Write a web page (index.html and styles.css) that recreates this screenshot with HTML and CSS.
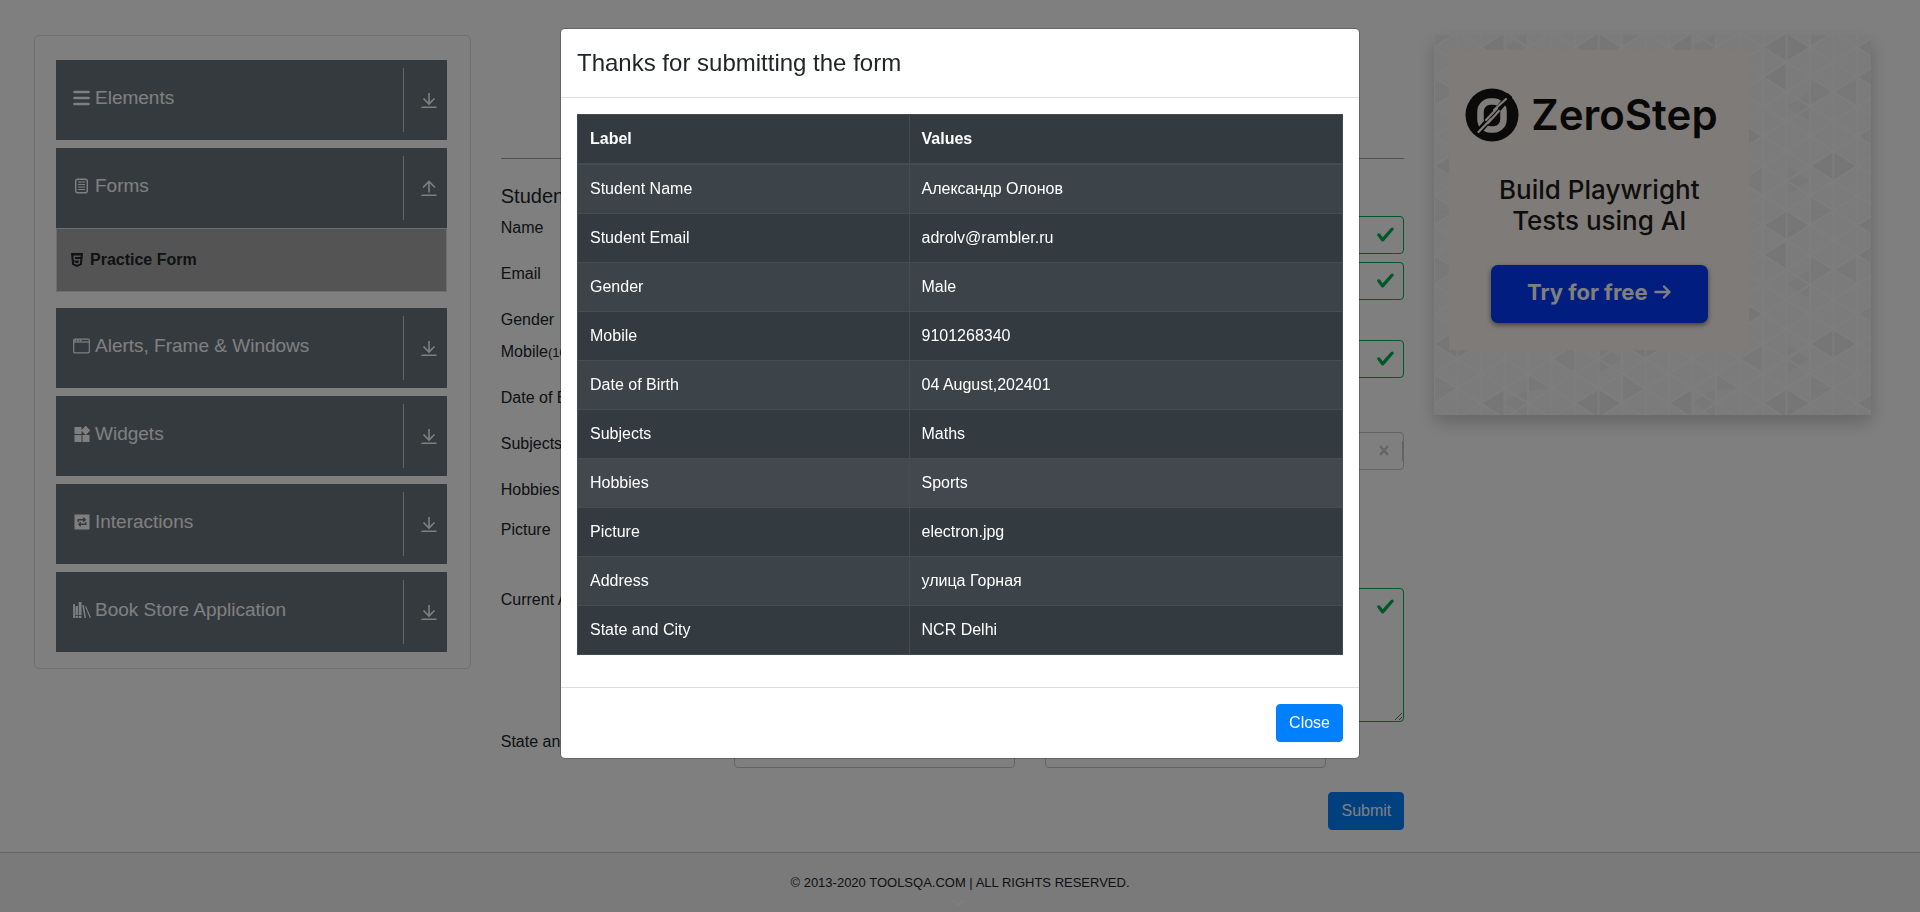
FILE: index.html
```html
<!DOCTYPE html>
<html lang="en">
<head>
<meta charset="utf-8">
<meta name="viewport" content="width=device-width, initial-scale=1">
<title>Practice Form</title>
<link rel="stylesheet" href="styles.css">
</head>
<body>
<svg class="defs" aria-hidden="true">
  <symbol id="down" viewBox="0 0 18 18"><path d="M9 2v11M3.500 7.500 9 13l5.500-5.500M1.500 16.300h15" fill="none" stroke="currentColor" stroke-width="1.600"/></symbol>
  <symbol id="up" viewBox="0 0 18 18"><path d="M9 13.500v-11M3 8.500 9 2.500l6 6M1.500 16.300h15" fill="none" stroke="currentColor" stroke-width="1.600"/></symbol>
  <symbol id="check" viewBox="0 0 8 8"><path fill="currentColor" d="M2.300 6.730.6 4.530c-.4-1.040.46-1.400 1.100-.8l1.100 1.400 3.400-3.800c.6-.63 1.600-.27 1.200.7l-4 4.600c-.43.5-.8.4-1.100.1z"/></symbol>
</svg>

<div class="page">
  <nav class="side">
    <div class="panel">
      <div class="group">
        <button class="head" type="button">
          <span class="title"><svg class="ico" viewBox="0 0 18 18"><path d="M2 3h14M2 9h14M2 15h14" stroke="currentColor" stroke-width="2.600" stroke-linecap="round"/></svg>Elements</span>
          <span class="toggle"><svg class="arrow"><use href="#down"/></svg></span>
        </button>
      </div>
      <div class="group open">
        <button class="head" type="button">
          <span class="title"><svg class="ico" viewBox="0 0 18 18"><rect x="3.200" y="2.200" width="11.600" height="13.600" rx="2" fill="none" stroke="currentColor" stroke-width="1.400"/><path d="M5.500 5h7M5.500 7.500h7M5.500 10h7M5.500 12.500h7" stroke="currentColor" stroke-width="1.200"/></svg>Forms</span>
          <span class="toggle"><svg class="arrow"><use href="#up"/></svg></span>
        </button>
        <a class="item" href="#form"><svg class="html5" viewBox="0 0 14 16"><path fill="currentColor" fill-rule="evenodd" d="M1 1h12l-1.100 11.800L7 15l-4.900-2.200zM3.300 3.600l.45 4.900h5l-.2 2.300L7 11.300l-1.600-.5-.1-1.100H3.900l.2 2.100L7 12.800l2.900-1 .5-4.900H5.200L5 5.100h5.600l.1-1.500z"/></svg>Practice Form</a>
      </div>
      <div class="group">
        <button class="head" type="button">
          <span class="title"><svg class="ico" viewBox="0 0 18 18"><rect x="1.200" y="2.200" width="15.600" height="13.600" rx="1" fill="none" stroke="currentColor" stroke-width="1.200"/><path d="M1 5h16" stroke="currentColor" stroke-width="1.200"/><path d="M2 3.400h7" stroke="currentColor" stroke-width="1.600" stroke-dasharray="1.800 .8"/></svg>Alerts, Frame &amp; Windows</span>
          <span class="toggle"><svg class="arrow"><use href="#down"/></svg></span>
        </button>
      </div>
      <div class="group">
        <button class="head" type="button">
          <span class="title"><svg class="ico" viewBox="0 0 18 18"><path fill="currentColor" d="M2 2h7v7H2zM2 10h7v7H2zM10 10h7v7h-7zM13.200.800l4.600 4.600-4.600 4.600-4.600-4.600z"/></svg>Widgets</span>
          <span class="toggle"><svg class="arrow"><use href="#down"/></svg></span>
        </button>
      </div>
      <div class="group">
        <button class="head" type="button">
          <span class="title"><svg class="ico" viewBox="0 0 18 18"><path fill="currentColor" d="M2 1.500h15v15H2z"/><path class="cut" d="M5.700 9V6.800H12M13.300 9v2.200H7M10.700 4.800l2 2-2 2M8.300 9.200l-2 2 2 2"/></svg>Interactions</span>
          <span class="toggle"><svg class="arrow"><use href="#down"/></svg></span>
        </button>
      </div>
      <div class="group">
        <button class="head" type="button">
          <span class="title"><svg class="ico" viewBox="0 0 18 18"><path fill="currentColor" d="M.6 3h1.800v14H.6zM3 5h2.400v9H3zM3 14.800h2.400V17H3zM6.200 1h2.800v13H6.200zM6.200 14.800H9V17H6.200zM9.800 4.300l1.500-.3 2.200 12.700-1.500.3zM12.600 5.400l.9-.5 4.900 11.500-1.100.6z"/></svg>Book Store Application</span>
          <span class="toggle"><svg class="arrow"><use href="#down"/></svg></span>
        </button>
      </div>
    </div>
  </nav>

  <main class="main">
    <hr class="rule">
    <form id="form">
      <h5 class="caption">Student Registration Form</h5>
      <div class="row">
        <label class="label" for="name">Name</label>
        <div class="field"><input class="control valid" id="name" type="text"><svg class="tick"><use href="#check"/></svg></div>
      </div>
      <div class="row">
        <label class="label" for="email">Email</label>
        <div class="field"><input class="control valid" id="email" type="email"><svg class="tick"><use href="#check"/></svg></div>
      </div>
      <div class="row low"><span class="label">Gender</span></div>
      <div class="row">
        <label class="label" for="mobile">Mobile<small>(10 Digits)</small></label>
        <div class="field"><input class="control valid" id="mobile" type="text"><svg class="tick"><use href="#check"/></svg></div>
      </div>
      <div class="row"><span class="label">Date of Birth</span></div>
      <div class="row">
        <label class="label" for="subjects">Subjects</label>
        <div class="field"><input class="control" id="subjects" type="text"><svg class="clear" viewBox="0 0 10 11"><path d="M1 1l8 9M9 1 1 10" stroke="currentColor" stroke-width="2.400"/></svg><span class="bar"></span></div>
      </div>
      <div class="row mid"><span class="label">Hobbies</span></div>
      <div class="row tall"><span class="label">Picture</span></div>
      <div class="row">
        <label class="label" for="address">Current Address</label>
        <div class="field"><textarea class="control area valid" id="address"></textarea><svg class="tick"><use href="#check"/></svg></div>
      </div>
      <div class="row last">
        <span class="label">State and City</span>
        <div class="field pair">
          <span class="pick"><select class="control" aria-label="State"><option></option></select></span>
          <span class="pick"><select class="control" aria-label="City"><option></option></select></span>
        </div>
      </div>
      <div class="actions"><button class="btn" type="submit">Submit</button></div>
    </form>
  </main>

  <aside class="promo">
    <div class="card">
      <svg class="pattern" aria-hidden="true">
        <defs>
          <pattern id="tri" width="188" height="178" patternUnits="userSpaceOnUse">
            <g fill="#ececec">
              <path d="M141 12.300 164.500-2.500 188 12.300 164.500 27.100zM141 190.300 164.500 175.400 188 190.300zM141 42 164.500 27.100V56.800zM0 131 23.500 116.200 47 131 23.500 145.800zM141 101.300 117.500 86.500V116.200zM47 12.300 70.500-2.500V27.100zM47 42 70.500 27.100V56.800zM23.500 175.400 0 160.600V178H20z"/>
            </g>
            <g fill="#f1f1f1">
              <path d="M0-2.500 23.500-2.500 0 12zM94-2.500 70.500 12 94 27zM188 56.800 164.500 71.500 188 86.500zM23.500 56.800 0 42V71.500zM23.500 56.800 47 42V71.500zM94 101.300 70.500 86.500V116.200zM117.500 145.800 141 131V160.600zM0 160.600 23.500 175.400 0 178zM188 145.800 164.500 160V131zM94 160.600 117.500 175 94 178zM47 101.300 70.500 86.500V116.200z"/>
            </g>
            <g stroke="#fbfbfb" stroke-width="2" fill="none">
              <path d="M0 0v178M23.500 0v178M47 0v178M70.500 0v178M94 0v178M117.500 0v178M141 0v178M164.500 0v178M188 0v178"/>
              <path d="M0-106.300 188 12.300M0-76.700 188 42M0-47 188 71.600M0-17.300 188 101.300M0 12.300 188 131M0 42 188 160.600M0 71.600 188 190.300M0 101.300 188 220M0 131 188 249.600M0 160.600 188 279.300"/>
              <path d="M188-106.300 0 12.300M188-76.700 0 42M188-47 0 71.600M188-17.300 0 101.300M188 12.300 0 131M188 42 0 160.600M188 71.600 0 190.300M188 101.300 0 220M188 131 0 249.600M188 160.600 0 279.300"/>
            </g>
          </pattern>
        </defs>
        <rect width="100%" height="100%" fill="url(#tri)"/>
      </svg>
      <div class="ad">
        <div class="brand">
          <svg class="logo" viewBox="0 0 54 54">
            <circle cx="27" cy="27" r="26.500" fill="#141414"/>
            <rect x="15.500" y="13.500" width="23" height="28" rx="10" fill="none" stroke="#fff8f3" stroke-width="6.500"/>
            <path d="M11 47 45 7" stroke="#141414" stroke-width="6"/>
            <path d="M13.500 44 26 31M21 32 32 20.500M23 35 34 23M29 22 41 11" stroke="#fff8f3" stroke-width="2.200" stroke-linecap="round"/>
          </svg>
          <span class="word">ZeroStep</span>
        </div>
        <p class="pitch">Build Playwright<br>Tests using AI</p>
        <a class="cta" href="#try">Try for free <svg class="go" viewBox="0 0 18 16"><path d="M1.500 8h14M10 2.500 15.500 8 10 13.500" fill="none" stroke="currentColor" stroke-width="2.400" stroke-linecap="round" stroke-linejoin="round"/></svg></a>
      </div>
    </div>
  </aside>
</div>

<footer class="footer">
  <span>© 2013-2020 TOOLSQA.COM | ALL RIGHTS RESERVED.</span>
  <svg class="chevron" viewBox="0 0 12 8"><path d="M1 1l5 5 5-5" fill="none" stroke="currentColor" stroke-width="1.500"/></svg>
</footer>

<div class="backdrop">
  <div class="dialog" role="dialog" aria-modal="true" aria-labelledby="dialog-title">
    <div class="dialog-head"><h4 class="dialog-title" id="dialog-title">Thanks for submitting the form</h4></div>
    <div class="dialog-body">
      <table class="table">
        <thead><tr><th>Label</th><th>Values</th></tr></thead>
        <tbody>
          <tr><td>Student Name</td><td>Александр Олонов</td></tr>
          <tr><td>Student Email</td><td>adrolv@rambler.ru</td></tr>
          <tr><td>Gender</td><td>Male</td></tr>
          <tr><td>Mobile</td><td>9101268340</td></tr>
          <tr><td>Date of Birth</td><td>04 August,202401</td></tr>
          <tr><td>Subjects</td><td>Maths</td></tr>
          <tr class="hover"><td>Hobbies</td><td>Sports</td></tr>
          <tr><td>Picture</td><td>electron.jpg</td></tr>
          <tr><td>Address</td><td>улица Горная</td></tr>
          <tr><td>State and City</td><td>NCR Delhi</td></tr>
        </tbody>
      </table>
    </div>
    <div class="dialog-foot"><button class="btn" type="button">Close</button></div>
  </div>
</div>
</body>
</html>
```
FILE: styles.css
```css
*, *::before, *::after { box-sizing: border-box; }

body {
  margin: 0;
  background: #fff;
  color: #212529;
  font: 16px/24px "Liberation Sans", Arial, sans-serif;
}

button, input, select, textarea { font: inherit; color: inherit; margin: 0; }

.defs { display: none; }

.page {
  display: flex;
  padding: 35px 34px 22px 19px;
}

.side, .promo { width: 25%; padding: 0 15px; }
.main { width: 50%; padding: 0 15px; }

/* Sidebar */
.panel {
  border: 1px solid #dfdfdf;
  border-radius: 5px;
  padding: 24px 23px 8px 21px;
}

.group { margin-bottom: 8px; }
.group.open { margin-bottom: 16px; }

.head {
  display: flex;
  width: 100%;
  height: 80px;
  padding: 8px 0 8px 16px;
  border: 0;
  background: #6b757c;
  color: #fff;
  font-size: 19px;
  text-align: left;
}

.title {
  flex: 1;
  display: flex;
  align-items: center;
  gap: 4px;
  padding-bottom: 4px;
}

.ico { width: 19px; height: 18px; }
.cut { fill: none; stroke: #6b757c; stroke-width: 1.4; }

.toggle {
  display: flex;
  align-items: center;
  justify-content: flex-end;
  width: 44px;
  padding-right: 9px;
  border-left: 1px solid #ccc;
}

.arrow { width: 18px; height: 18px; }

.item {
  display: flex;
  align-items: center;
  gap: 6px;
  height: 64px;
  padding-left: 13px;
  border: 1px solid #d6dce2;
  background: #a9a9a9;
  color: #212529;
  font-weight: 700;
  text-decoration: none;
}

.html5 { width: 14px; height: 16px; }

/* Form */
.rule {
  margin: 123px 0 0;
  border: 0;
  border-top: 1px solid #a0a0a0;
}

.caption {
  margin: 25px 0 8px;
  font-size: 20px;
  font-weight: 400;
  line-height: 24px;
}

.row { display: flex; min-height: 38px; margin-bottom: 8px; }
.row.low { min-height: 24px; }
.row.mid { min-height: 32px; }
.row.tall { min-height: 62px; }
.row.last { margin-bottom: 24px; }

.label { width: 25%; padding-right: 15px; }
.label small { font-size: 13px; }

.field { position: relative; flex: 1; padding-left: 7px; }

.control {
  display: block;
  width: 100%;
  height: 38px;
  padding: 6px 12px;
  border: 1px solid #c8c8c8;
  border-radius: 4px;
  background: transparent;
}

.area { height: 134px; }
.valid { border-color: #00b050; }

.tick {
  position: absolute;
  top: 9px;
  right: 9px;
  width: 19px;
  height: 19px;
  color: #00b050;
}

.clear {
  position: absolute;
  top: 13px;
  right: 15px;
  width: 10px;
  height: 11px;
  color: #c8c8c8;
}

.bar {
  position: absolute;
  top: 9px;
  right: 1px;
  width: 1px;
  height: 20px;
  background: #c8c8c8;
}

.pair { display: flex; gap: 30px; padding-right: 78px; }
.pick { flex: 1; }
.pick .control { appearance: none; }

.actions { display: flex; justify-content: flex-end; }

.btn {
  height: 38px;
  padding: 6px 12px;
  border: 1px solid #0080ff;
  border-radius: 4px;
  background: #0080ff;
  color: #fff;
}

/* Promo */
.card {
  position: relative;
  height: 380px;
  padding: 15px;
  background: #f6f6f6;
  box-shadow: 0 8px 16px rgba(0, 0, 0, .2);
}

.pattern { position: absolute; inset: 0; width: 100%; height: 100%; }

.ad {
  position: relative;
  display: flex;
  flex-direction: column;
  align-items: center;
  width: 300px;
  height: 300px;
  padding-top: 38px;
  background: #fff6f0;
  color: #1c1c1c;
  font-family: Inter, sans-serif;
}

.brand {
  display: flex;
  align-items: center;
  align-self: stretch;
  gap: 12px;
  padding-left: 16px;
}

.logo { width: 54px; height: 54px; }
.word { font-size: 42px; font-weight: 600; line-height: 54px; color: #111; }

.pitch {
  margin: 32px 0 29px;
  font-size: 26px;
  font-weight: 500;
  line-height: 31px;
  text-align: center;
}

.cta {
  display: flex;
  align-items: center;
  justify-content: center;
  gap: 6px;
  width: 217px;
  height: 58px;
  padding-bottom: 4px;
  border-radius: 7px;
  background: #003aff;
  box-shadow: 0 2px 5px rgba(0, 0, 0, .5);
  color: #fff;
  font-size: 22px;
  font-weight: 700;
  text-decoration: none;
}

.go { width: 18px; height: 16px; }

/* Footer */
.footer {
  position: relative;
  display: flex;
  align-items: center;
  justify-content: center;
  height: 60px;
  border-top: 1px solid #c8c8c8;
  background: #f5f5f5;
  font-size: 13px;
}

.chevron {
  position: absolute;
  bottom: 5px;
  left: calc(50% - 8px);
  width: 12px;
  height: 8px;
  color: #fff;
}

/* Dialog */
.backdrop {
  position: fixed;
  inset: 0;
  padding-top: 28px;
  background: rgba(0, 0, 0, .5);
}

.dialog {
  max-width: 800px;
  margin: 0 auto;
  border: 1px solid rgba(0, 0, 0, .2);
  border-radius: 5px;
  background: #fff;
  background-clip: padding-box;
}

.dialog-head { padding: 16px; border-bottom: 1px solid #dedfe0; }
.dialog-title { margin: 0; font-size: 24px; font-weight: 400; line-height: 36px; }
.dialog-body { padding: 16px; }

.dialog-foot {
  display: flex;
  justify-content: flex-end;
  padding: 16px;
  border-top: 1px solid #dedfe0;
}

.table {
  width: 100%;
  margin-bottom: 16px;
  border-collapse: collapse;
  background: #333a40;
  color: #fff;
}

.table th, .table td {
  padding: 12px;
  border: 1px solid #434d54;
  text-align: left;
}

.table th { border-bottom-width: 2px; }
.table tbody tr:nth-child(odd) { background: rgba(255, 255, 255, .05); }
.table tbody tr.hover { background: rgba(255, 255, 255, .075); }
```
